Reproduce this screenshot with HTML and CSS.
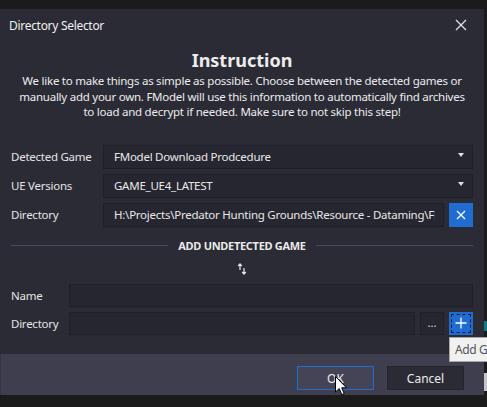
FILE: index.html
```html
<!DOCTYPE html>
<html>
<head>
<meta charset="utf-8">
<link rel="stylesheet" href="styles.css">
</head>
<body>
<div class="window">
  <div class="titlebar">
    <span class="title">Directory Selector</span>
    <svg class="close" width="12" height="12" viewBox="0 0 12 12"><path d="M1 1L11 11M11 1L1 11" stroke="#e6e6e6" stroke-width="1.2"/></svg>
  </div>
  <div class="content">
    <h1 class="heading">Instruction</h1>
    <p class="intro">We like to make things as simple as possible. Choose between the detected games or<br>manually add your own. FModel will use this information to automatically find archives<br>to load and decrypt if needed. Make sure to not skip this step!</p>
    <div class="form">
      <label class="lbl">Detected Game</label>
      <div class="field combo"><span class="val">FModel Download Prodcedure</span><span class="caret"></span></div>
      <label class="lbl">UE Versions</label>
      <div class="field combo"><span class="val">GAME_UE4_LATEST</span><span class="caret"></span></div>
      <label class="lbl">Directory</label>
      <div class="inline">
        <div class="field text"><span class="val clip">H:\Projects\Predator Hunting Grounds\Resource - Dataming\FModel</span></div>
        <div class="btn blue"><svg width="10" height="10" viewBox="0 0 10 10"><path d="M1 1L9 9M9 1L1 9" stroke="#fff" stroke-width="1.2"/></svg></div>
      </div>
    </div>
    <div class="sep"><span class="line"></span><span class="sep-text">ADD UNDETECTED GAME</span><span class="line"></span></div>
    <div class="swap"><svg width="10" height="12" viewBox="0 0 10 12"><path d="M3 1V7M1.2 3L3 1L4.8 3" stroke="#e8e8e8" stroke-width="1.2" fill="none"/><path d="M7 5V11M5.2 9L7 11L8.8 9" stroke="#e8e8e8" stroke-width="1.2" fill="none"/></svg></div>
    <div class="form small">
      <label class="lbl">Name</label>
      <div class="field text"></div>
      <label class="lbl">Directory</label>
      <div class="inline">
        <div class="field text"></div>
        <div class="btn dark"><span class="dots">...</span></div>
        <div class="btn blue focus"><svg width="12" height="12" viewBox="0 0 12 12"><path d="M6 0.5V11.5M0.5 6H11.5" stroke="#fff" stroke-width="1.3"/></svg></div>
      </div>
    </div>
  </div>
  <div class="footer">
    <div class="fbtn ok">OK</div>
    <div class="fbtn cancel">Cancel</div>
  </div>
</div>
<div class="tooltip">Add G</div>
<div class="edge teal"></div>
<div class="edge grey"></div>
<svg class="cursor" width="13" height="20" viewBox="0 0 13 20"><path d="M0.5 0.5V16L4.2 12.6L6.8 18.6L9.2 17.6L6.7 11.8H11.5Z" fill="#fff" stroke="#000" stroke-width="1"/></svg>
</body>
</html>
```
FILE: styles.css
```css
* { box-sizing: border-box; }
html, body { margin: 0; padding: 0; }
body {
  width: 487px;
  height: 407px;
  background: #1b1b1c;
  font-family: "Noto Sans", "Open Sans", sans-serif;
  font-size: 11.5px;
  color: #e6e6e6;
  position: relative;
  overflow: hidden;
}
.window {
  margin-top: 9px;
  width: 484px;
  height: 386px;
  background: #2b2b36;
  display: flex;
  flex-direction: column;
}
.titlebar {
  height: 32px;
  display: flex;
  align-items: center;
  justify-content: space-between;
  padding: 0 17px 0 9px;
}
.title { font-size: 12px; letter-spacing: -0.3px; color: #f0f0f0; }
.content {
  flex: 1;
  padding: 8px 11px 0;
}
.heading {
  margin: 0;
  text-align: center;
  font-size: 18px;
  font-weight: 700;
  line-height: 23px;
  color: #ececec;
}
.intro {
  margin: 0;
  padding-top: 1px;
  text-align: center;
  line-height: 15.5px;
  letter-spacing: -0.25px;
  white-space: nowrap;
  color: #ececec;
}
.form {
  margin-top: 25px;
  display: grid;
  grid-template-columns: 92px 1fr;
  row-gap: 5px;
  align-items: center;
}
.form.small {
  margin-top: 7px;
  grid-template-columns: 58px 1fr;
  row-gap: 5px;
}
.form.small .field, .form.small .btn { height: 23px; }
.lbl { color: #e4e4e4; letter-spacing: -0.25px; }
.field {
  height: 24px;
  background: #262630;
  border: 1px solid #1f1f27;
  display: flex;
  align-items: center;
  padding: 0 8px 0 10px;
  min-width: 0;
  overflow: hidden;
}
.val { color: #e8e8e8; white-space: nowrap; letter-spacing: -0.25px; }
.combo { justify-content: space-between; }
.caret {
  width: 0; height: 0;
  border-left: 3.5px solid transparent;
  border-right: 3.5px solid transparent;
  border-top: 4px solid #e0e0e0;
  margin-bottom: 3px;
}
.inline { display: flex; gap: 5px; min-width: 0; }
.inline .text { flex: 1; }
.clip { overflow: hidden; }
.btn {
  width: 24px;
  height: 24px;
  flex: none;
  display: flex;
  align-items: center;
  justify-content: center;
}
.btn.blue { background: #1f6dd3; }
.btn.focus { outline: 1px dashed #0d1b33; outline-offset: -3px; }
.btn.dark { background: #262630; border: 1px solid #1f1f27; }
.dots { color: #e0e0e0; font-size: 11px; line-height: 1; margin-top: -2px; }
.sep {
  margin-top: 12px;
  display: flex;
  align-items: center;
  gap: 10px;
  height: 14px;
}
.sep .line { flex: 1; height: 1px; background: #4a4862; }
.sep-text { font-size: 11px; font-weight: 700; letter-spacing: -0.3px; color: #eaeaea; }
.swap {
  display: flex;
  justify-content: center;
  padding: 10px 0 0 0;
  height: 24px;
}
.footer {
  height: 41px;
  background: #3f3e4e;
  border-left: 1px solid #35343f;
  display: flex;
  justify-content: flex-end;
  align-items: flex-start;
  padding: 12px 20px 0 0;
  gap: 13px;
}
.fbtn {
  width: 77px;
  height: 24px;
  display: flex;
  align-items: center;
  justify-content: center;
  color: #ececec;
  font-size: 12px;
}
.ok { background: #454457; border: 1px solid #1f6fd0; }
.cancel { background: #2b2b36; border: 1px solid #24242c; }
.tooltip {
  position: absolute;
  left: 449px;
  top: 337px;
  width: 38px;
  height: 25px;
  background: #f1f1f1;
  border: 1px solid #a8a8a8;
  border-right: none;
  color: #555;
  font-size: 12px;
  letter-spacing: -0.4px;
  padding: 3px 0 0 5px;
  white-space: nowrap;
  overflow: hidden;
}
.edge { position: absolute; left: 484px; width: 3px; }
.edge.teal { top: 321px; height: 10px; background: #0b7c8f; }
.edge.grey { top: 373px; height: 18px; background: #c4c4c4; }
.cursor { position: absolute; left: 335px; top: 376px; }
```
